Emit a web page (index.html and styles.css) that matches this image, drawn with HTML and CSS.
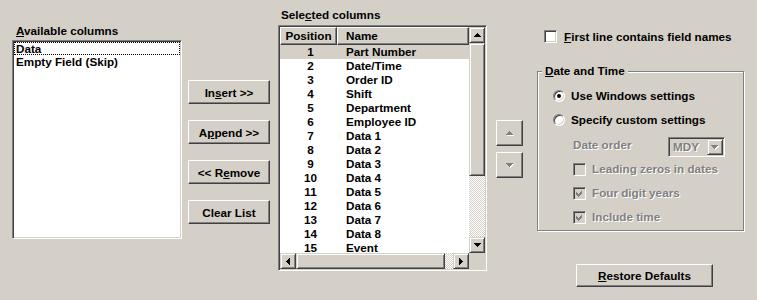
FILE: index.html
```html
<!DOCTYPE html>
<html lang="en">
<head>
  <meta charset="UTF-8">
  <title>Import Columns</title>
  <link rel="stylesheet" href="styles.css">
</head>
<body>
  <div class="dialog">
    <!-- available columns -->
    <div class="col-available">
      <div class="label"><u>A</u>vailable columns</div>
      <div class="listbox sunken">
        <div class="item focused">Data</div>
        <div class="item">Empty Field (Skip)</div>
      </div>
    </div>

    <div class="col-buttons">
      <button class="btn raised">In<u>s</u>ert &gt;&gt;</button>
      <button class="btn raised">A<u>p</u>pend &gt;&gt;</button>
      <button class="btn raised">&lt;&lt; R<u>e</u>move</button>
      <button class="btn raised">Clear List</button>
    </div>

    <!-- selected columns -->
    <div class="col-selected">
      <div class="label">Sele<u>c</u>ted columns</div>
      <div class="listview sunken">
        <div class="lv-content">
          <div class="lv-header">
            <div class="lv-head pos raised">Position</div>
            <div class="lv-head name raised">Name</div>
          </div>
          <div class="lv-row selected"><span class="pos">1</span><span class="name">Part Number</span></div>
          <div class="lv-row"><span class="pos">2</span><span class="name">Date/Time</span></div>
          <div class="lv-row"><span class="pos">3</span><span class="name">Order ID</span></div>
          <div class="lv-row"><span class="pos">4</span><span class="name">Shift</span></div>
          <div class="lv-row"><span class="pos">5</span><span class="name">Department</span></div>
          <div class="lv-row"><span class="pos">6</span><span class="name">Employee ID</span></div>
          <div class="lv-row"><span class="pos">7</span><span class="name">Data 1</span></div>
          <div class="lv-row"><span class="pos">8</span><span class="name">Data 2</span></div>
          <div class="lv-row"><span class="pos">9</span><span class="name">Data 3</span></div>
          <div class="lv-row"><span class="pos">10</span><span class="name">Data 4</span></div>
          <div class="lv-row"><span class="pos">11</span><span class="name">Data 5</span></div>
          <div class="lv-row"><span class="pos">12</span><span class="name">Data 6</span></div>
          <div class="lv-row"><span class="pos">13</span><span class="name">Data 7</span></div>
          <div class="lv-row"><span class="pos">14</span><span class="name">Data 8</span></div>
          <div class="lv-row"><span class="pos">15</span><span class="name">Event</span></div>
        </div>
        <div class="vscroll">
          <div class="sbtn"><svg width="7" height="4"><path d="M3 0h1v1h1v1h1v1h1v1H0V3h1V2h1V1h1z"/></svg></div>
          <div class="sbtn thumb-v"></div>
          <div class="track"></div>
          <div class="sbtn"><svg width="7" height="4"><path d="M0 0h7v1H6v1H5v1H4v1H3V3H2V2H1V1H0z"/></svg></div>
        </div>
        <div class="hscroll">
          <div class="sbtn"><svg width="4" height="7"><path d="M0 3h1V2h1V1h1V0h1v7H3V6H2V5H1V4H0z"/></svg></div>
          <div class="sbtn thumb-h"></div>
          <div class="track"></div>
          <div class="sbtn"><svg width="4" height="7"><path d="M0 0h1v1h1v1h1v1h1v1H3v1H2v1H1v1H0z"/></svg></div>
        </div>
        <div class="corner"></div>
      </div>
    </div>

    <div class="col-order">
      <div class="order-btn raised">
        <svg width="8" height="5"><path class="shade" d="M4 1h1v1h1v1h1v1h1v1H1V4h1V3h1V2h1z"/><path class="ink" d="M3 0h1v1h1v1h1v1h1v1H0V3h1V2h1V1h1z"/></svg>
      </div>
      <div class="order-btn raised">
        <svg width="8" height="5"><path class="shade" d="M1 1h7v1H7v1H6v1H5v1H4V4H3V3H2V2H1z"/><path class="ink" d="M0 0h7v1H6v1H5v1H4v1H3V3H2V2H1V1H0z"/></svg>
      </div>
    </div>

    <!-- options -->
    <div class="col-options">
      <div class="check-row first-line">
        <div class="checkbox sunken"></div>
        <span><u>F</u>irst line contains field names</span>
      </div>

      <div class="group">
        <div class="group-title"><span><u>D</u>ate and Time</span></div>
        <div class="group-body">
          <div class="opt-row first">
            <div class="radio checked"></div>
            <span>Use Windows settings</span>
          </div>
          <div class="opt-row">
            <div class="radio"></div>
            <span>Specify custom settings</span>
          </div>
          <div class="date-row">
            <span class="date-label off">Date order</span>
            <div class="combo sunken">
              <span class="combo-text off">MDY</span>
              <div class="sbtn"><svg width="8" height="5"><path class="shade" d="M1 1h7v1H7v1H6v1H5v1H4V4H3V3H2V2H1z"/><path class="ink" d="M0 0h7v1H6v1H5v1H4v1H3V3H2V2H1V1H0z"/></svg></div>
            </div>
          </div>
          <div class="opt-row sub first-sub">
            <div class="checkbox sunken disabled"></div>
            <span class="off">Leading zeros in dates</span>
          </div>
          <div class="opt-row sub">
            <div class="checkbox sunken disabled"><svg width="7" height="7"><path d="M0 2l2 2 4-4v3L2 7 0 5z"/></svg></div>
            <span class="off">Four digit years</span>
          </div>
          <div class="opt-row sub">
            <div class="checkbox sunken disabled"><svg width="7" height="7"><path d="M0 2l2 2 4-4v3L2 7 0 5z"/></svg></div>
            <span class="off">Include time</span>
          </div>
        </div>
      </div>

      <button class="btn raised restore"><u>R</u>estore Defaults</button>
    </div>
  </div>
</body>
</html>
```

FILE: styles.css
```css
* {
  margin: 0;
  padding: 0;
  box-sizing: border-box;
}

body {
  font-family: "Liberation Sans", Arial, sans-serif;
  font-weight: bold;
  font-size: 11.7px;
  color: #000;
  background: #d4d0c8;
  width: 757px;
  height: 300px;
  overflow: hidden;
}

u {
  text-underline-offset: 1px;
}

.dialog {
  display: flex;
  align-items: flex-start;
  padding-left: 12px;
}

.label {
  height: 14px;
  line-height: 14px;
  white-space: nowrap;
}

/* 3d borders */
.sunken {
  border: 1px solid;
  border-color: #808080 #fff #fff #808080;
  box-shadow: inset 1px 1px #404040, inset -1px -1px #d4d0c8;
  padding: 1px;
}

.raised {
  border: 1px solid;
  border-color: #fff #404040 #404040 #fff;
  box-shadow: inset -1px -1px #808080;
  background: #d4d0c8;
}

.sbtn {
  width: 16px;
  height: 16px;
  flex-shrink: 0;
  border: 1px solid;
  border-color: #d4d0c8 #404040 #404040 #d4d0c8;
  box-shadow: inset 1px 1px #fff, inset -1px -1px #808080;
  background: #d4d0c8;
  display: flex;
  align-items: center;
  justify-content: center;
}

.sbtn svg,
.order-btn svg,
.checkbox svg {
  display: block;
  shape-rendering: crispEdges;
}

.track {
  flex: 1;
  background: repeating-conic-gradient(#d4d0c8 0 25%, #fff 0 50%) 0 0 / 2px 2px;
}

.btn {
  display: flex;
  align-items: center;
  justify-content: center;
  width: 82px;
  height: 24px;
  font: inherit;
  color: #000;
  white-space: nowrap;
}

/* available */
.col-available {
  width: 170px;
  padding-top: 24px;
}

.col-available .label {
  padding-left: 4px;
  margin-bottom: 2px;
}

.listbox {
  height: 199px;
  background: #fff;
}

.item {
  height: 13px;
  line-height: 13px;
  padding-left: 2px;
  white-space: nowrap;
}

.item.focused {
  outline: 1px dotted #000;
  outline-offset: -1px;
}

.col-buttons {
  margin-left: 6px;
  padding-top: 80px;
  display: flex;
  flex-direction: column;
  gap: 16px;
}

/* selected */
.col-selected {
  margin-left: 8px;
  padding-top: 8px;
}

.col-selected .label {
  padding-left: 3px;
  margin-bottom: 3px;
}

.listview {
  width: 209px;
  height: 246px;
  display: grid;
  grid-template-columns: 1fr 16px;
  grid-template-rows: 1fr 16px;
  background: #fff;
}

.lv-content {
  overflow: hidden;
  min-height: 0;
}

.lv-header,
.lv-row {
  display: grid;
  grid-template-columns: 57px 1fr;
}

.lv-head {
  height: 18px;
  line-height: 16px;
  white-space: nowrap;
}

.lv-head.pos {
  text-align: center;
}

.lv-head.name {
  padding-left: 8px;
}

.lv-row {
  height: 14px;
  line-height: 14px;
  white-space: nowrap;
}

.lv-row .pos {
  text-align: center;
  padding-left: 4px;
}

.lv-row .name {
  padding-left: 9px;
}

.lv-row.selected {
  background: #d4d0c8;
}

.vscroll {
  display: flex;
  flex-direction: column;
  min-height: 0;
}

.thumb-v {
  height: 133px;
}

.hscroll {
  display: flex;
}

.thumb-h {
  width: 149px;
}

.corner {
  background: #d4d0c8;
}

/* order buttons */
.col-order {
  margin-left: 9px;
  padding-top: 120px;
  display: flex;
  flex-direction: column;
  gap: 6px;
}

.order-btn {
  width: 27px;
  height: 26px;
  display: flex;
  align-items: center;
  justify-content: center;
}

.shade {
  fill: #fff;
}

.ink {
  fill: #808080;
}

/* options */
.col-options {
  margin-left: 14px;
  width: 207px;
}

.check-row {
  display: flex;
  align-items: center;
  height: 13px;
  line-height: 13px;
  white-space: nowrap;
}

.first-line {
  margin-top: 30px;
  padding-left: 7px;
  gap: 7px;
}

.checkbox {
  width: 13px;
  height: 13px;
  flex-shrink: 0;
  background: #fff;
  display: flex;
  align-items: center;
  justify-content: center;
}

.checkbox.disabled {
  background: #d4d0c8;
}

.checkbox svg {
  fill: #808080;
}

.group {
  margin-top: 28px;
  height: 160px;
  border: 1px solid #808080;
  box-shadow: inset 1px 1px #fff, 1px 1px #fff;
}

.group-title {
  margin-top: -8px;
  height: 14px;
  line-height: 14px;
  padding-left: 4px;
  white-space: nowrap;
}

.group-title span {
  background: #d4d0c8;
  padding: 0 3px;
}

.group-body {
  padding-left: 15px;
}

.opt-row {
  display: flex;
  align-items: center;
  gap: 6px;
  height: 14px;
  line-height: 14px;
  margin-top: 10px;
  white-space: nowrap;
}

.opt-row.first {
  margin-top: 11px;
}

.opt-row.sub {
  padding-left: 20px;
}

.opt-row.first-sub {
  margin-top: 5px;
}

.radio {
  width: 12px;
  height: 12px;
  flex-shrink: 0;
  border-radius: 50%;
  border: 1px solid;
  border-color: #808080 #fff #fff #808080;
  box-shadow: inset 1px 1px #404040, inset -1px -1px #d4d0c8;
  background: #fff;
  display: flex;
  align-items: center;
  justify-content: center;
}

.radio.checked::after {
  content: "";
  width: 4px;
  height: 4px;
  border-radius: 50%;
  background: #000;
}

.date-row {
  display: flex;
  align-items: flex-start;
  height: 20px;
  margin-top: 10px;
}

.date-label {
  width: 95px;
  margin-left: 20px;
  margin-top: 1px;
  line-height: 14px;
  white-space: nowrap;
}

.off {
  color: #808080;
  text-shadow: 1px 1px 0 #fff;
}

.combo {
  width: 57px;
  height: 20px;
  display: flex;
  background: #d4d0c8;
}

.combo-text {
  flex: 1;
  padding-left: 3px;
  line-height: 16px;
}

.restore {
  margin-top: 33px;
  margin-left: 39px;
  width: 137px;
  height: 23px;
}
```
